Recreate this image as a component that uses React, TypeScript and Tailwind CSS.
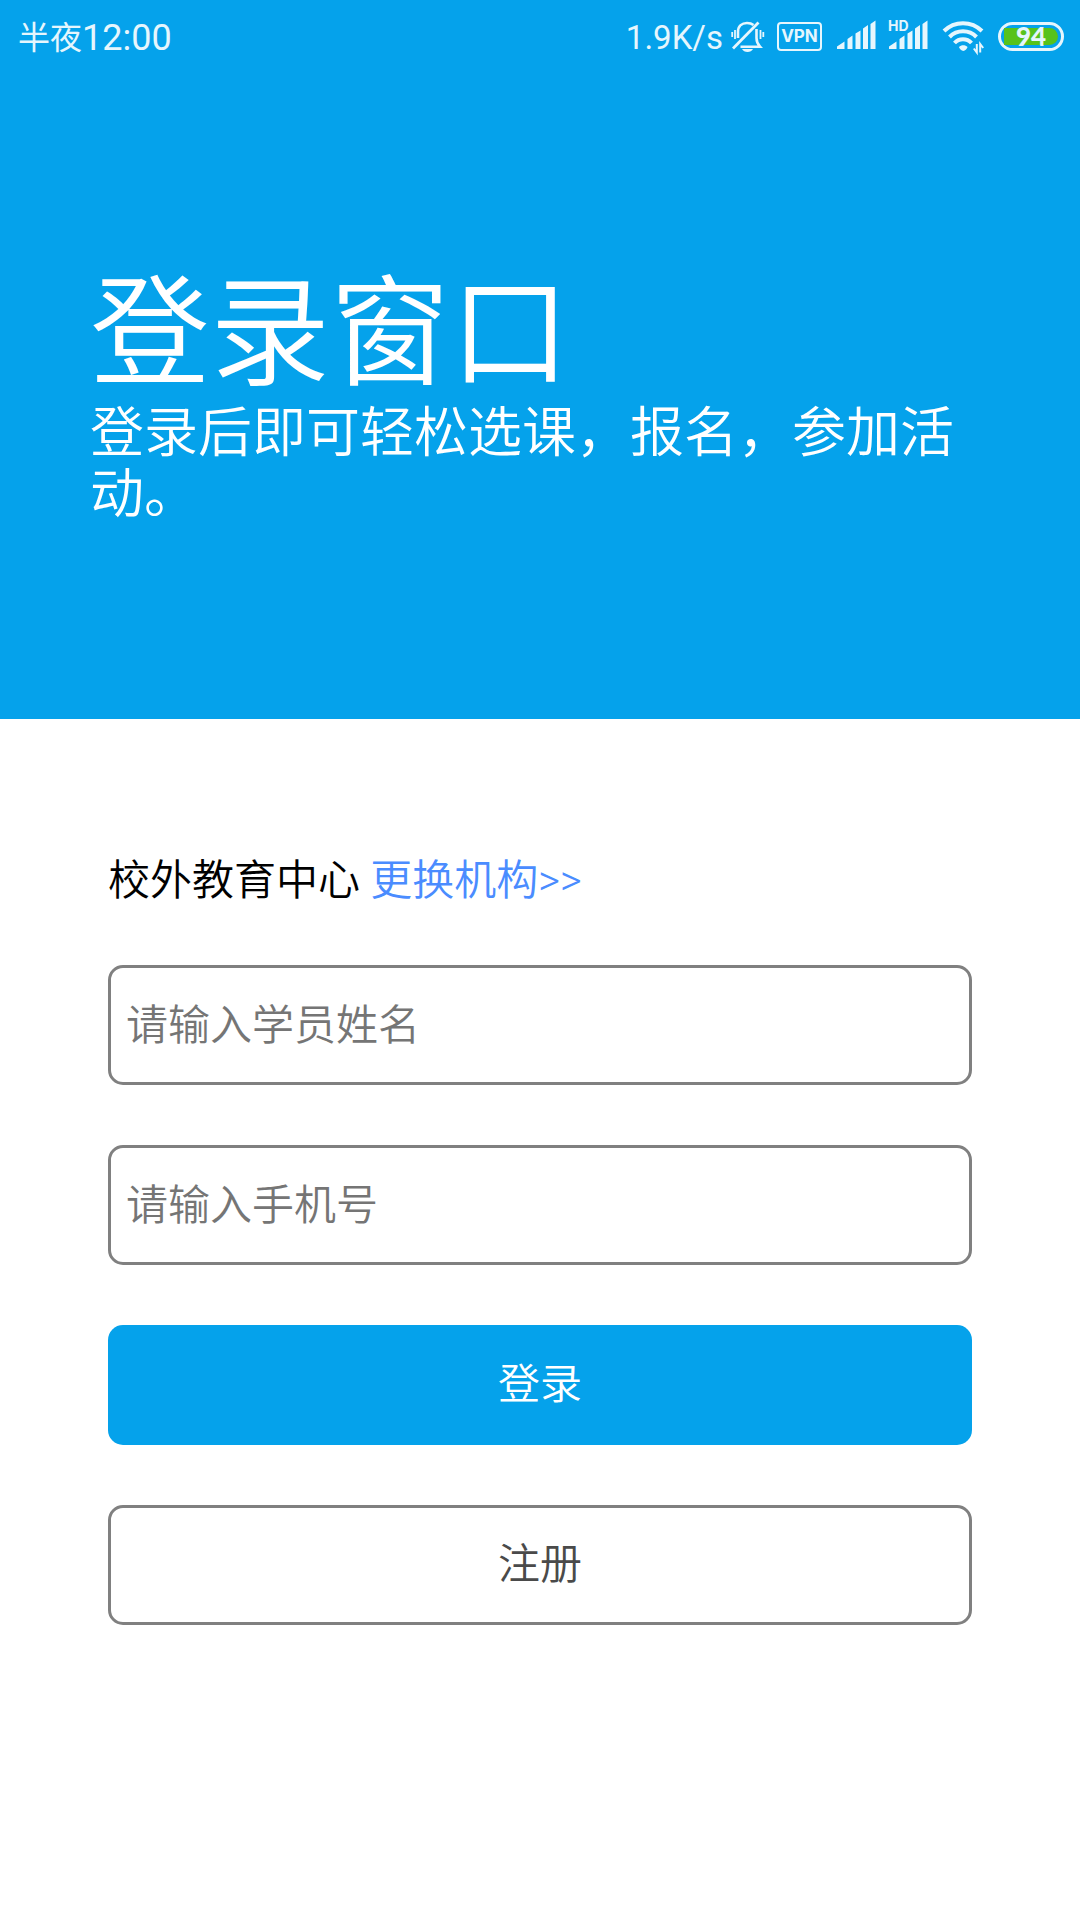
import { useState } from "react";

const FONT = "font-[Roboto,'Noto_Sans_CJK_SC',sans-serif]";

function MutedBell() {
  return (
    <svg width="34" height="40" viewBox="0 0 34 40" fill="none" stroke="currentColor" strokeWidth="2.6" aria-hidden="true">
      <path d="M7 22V16C7 10 11 7 16 7c3 0 5 .8 6.500 2" />
      <path d="M25.500 13v9c0 4 1 6 3.500 8.700H9.500" />
      <path d="M2 32.500 27.500 6.500" strokeWidth="2.800" />
      <path d="M1.200 16v5M4 14v9M29.500 14v9M32.300 16v5" strokeWidth="1.800" />
      <path d="M11 33h11c-1 2-3 3-5.500 3S12 35 11 33z" fill="currentColor" stroke="none" />
    </svg>
  );
}

function Signal() {
  return (
    <svg width="40" height="40" viewBox="0 0 40 40" fill="currentColor" aria-hidden="true">
      <path d="M1 33v-2.500l7.500-5V33zM11.500 33V23l5-3.500V33zM19.500 33V17.500l5-3V33zM27 33V12.500l5-3.500v24zM34.500 33V8l5-3.500V33z" />
    </svg>
  );
}

function Wifi() {
  return (
    <svg width="42" height="40" viewBox="0 0 42 40" fill="none" stroke="currentColor" strokeWidth="4" aria-hidden="true">
      <path d="M2 15a27 27 0 0 1 38 0" />
      <path d="M7.500 21a19 19 0 0 1 27 0" />
      <path d="M12.500 27a11.500 11.500 0 0 1 17 0" />
      <path d="M17 31c2-2.500 6.500-2.500 8.500 0 0 1-2.500 4-4.200 4s-4.300-3-4.300-4z" fill="currentColor" stroke="none" />
      <path d="M34.800 28v8.500l-3-4M38.200 36.500V28l3 4" strokeWidth="2" />
    </svg>
  );
}

function StatusBar() {
  return (
    <div className="flex h-[72px] items-center justify-between pl-[18px] pr-4 text-[#e6f6fd]">
      <div className="flex items-center pt-1 leading-none">
        <span className="text-[32px]">半夜</span>
        <span className="text-[36px]">12:00</span>
      </div>
      <div className="flex items-center">
        <span className="mr-2 pt-0.5 text-[33px] leading-none">1.9K/s</span>
        <MutedBell />
        <span className="ml-3 flex h-[29px] w-[45px] items-center justify-center rounded-[4px] border-2 border-current font-[Inter] text-[17px] font-bold leading-none">
          VPN
        </span>
        <span className="ml-3.5">
          <Signal />
        </span>
        <span className="relative ml-3">
          <Signal />
          <span className="absolute left-0 top-[3px] font-[Inter] text-[14px] font-bold leading-none">HD</span>
        </span>
        <span className="ml-3.5">
          <Wifi />
        </span>
        <span className="ml-3.5 flex h-[29px] w-[66px] rounded-full border-3 border-current p-[3px]">
          <span className="flex flex-1 items-center justify-center rounded-l-[4px] rounded-r-full bg-[#57c21b] font-[Lato] text-[26px] font-black leading-none">
            94
          </span>
        </span>
      </div>
    </div>
  );
}

function TextField({
  label,
  type,
  value,
  onChange,
}: {
  label: string;
  type: string;
  value: string;
  onChange: (value: string) => void;
}) {
  return (
    <input
      type={type}
      aria-label={label}
      placeholder={label}
      value={value}
      onChange={(e) => onChange(e.target.value)}
      className="h-[120px] w-full rounded-[15px] border-3 border-[#808080] px-[15px] text-[42px] font-[350] text-black placeholder:text-[#757575]"
    />
  );
}

export default function App() {
  const [name, setName] = useState("");
  const [phone, setPhone] = useState("");

  return (
    <main className={`min-h-screen bg-white ${FONT}`}>
      <header className="bg-[#05a2eb] pb-[194px] text-white">
        <StatusBar />
        <div className="px-[90px] pt-[195px]">
          <h1 className="text-[120px] font-[350] leading-[136px]">登录窗口</h1>
          <p className="text-[54px] font-[350] leading-[61px]">登录后即可轻松选课，报名，参加活动。</p>
        </div>
      </header>
      <form className="flex flex-col gap-[60px] px-[108px] pt-[138px]" onSubmit={(e) => e.preventDefault()}>
        <p className="text-[42px] font-[350] leading-[48px] text-black">
          校外教育中心{" "}
          <a href="#" className="text-[#4a8cff]">
            更换机构&gt;&gt;
          </a>
        </p>
        <TextField label="请输入学员姓名" type="text" value={name} onChange={setName} />
        <TextField label="请输入手机号" type="tel" value={phone} onChange={setPhone} />
        <button type="submit" className="h-[120px] rounded-[15px] bg-[#05a2eb] pb-0.5 text-[42px] font-[350] text-white">
          登录
        </button>
        <button
          type="button"
          className="h-[120px] rounded-[15px] border-3 border-[#808080] pb-0.5 text-[42px] font-[350] text-[#4a4a4a]">
          注册
        </button>
      </form>
    </main>
  );
}
